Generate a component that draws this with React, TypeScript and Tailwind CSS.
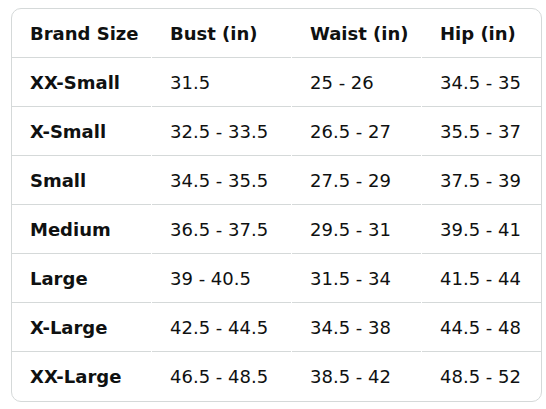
import React from 'react';

const headers = ['Brand Size', 'Bust (in)', 'Waist (in)', 'Hip (in)'];

const rows: string[][] = [
  ['XX-Small', '31.5', '25 - 26', '34.5 - 35'],
  ['X-Small', '32.5 - 33.5', '26.5 - 27', '35.5 - 37'],
  ['Small', '34.5 - 35.5', '27.5 - 29', '37.5 - 39'],
  ['Medium', '36.5 - 37.5', '29.5 - 31', '39.5 - 41'],
  ['Large', '39 - 40.5', '31.5 - 34', '41.5 - 44'],
  ['X-Large', '42.5 - 44.5', '34.5 - 38', '44.5 - 48'],
  ['XX-Large', '46.5 - 48.5', '38.5 - 42', '48.5 - 52'],
];

export default function App() {
  const all = [headers, ...rows];
  return (
    <div className="min-h-screen bg-white pl-[11px] pt-[8px] font-['DejaVu_Sans',sans-serif] text-[#0f1111]">
      <div className="w-[531px] overflow-hidden rounded-[10px] border border-[#d5d9d9]">
        <div className="grid grid-cols-[139px_139px_129px_119px] gap-x-px">
          {all.map((row, r) =>
            row.map((cell, c) => (
              <div
                key={`${r}-${c}`}
                className={`flex h-[49px] items-center pl-[18px] text-[18px] ${
                  r < all.length - 1 ? 'border-b border-[#d5d9d9]' : ''
                } ${r === 0 || c === 0 ? 'font-bold' : ''}`}
              >
                {cell}
              </div>
            ))
          )}
        </div>
      </div>
    </div>
  );
}
